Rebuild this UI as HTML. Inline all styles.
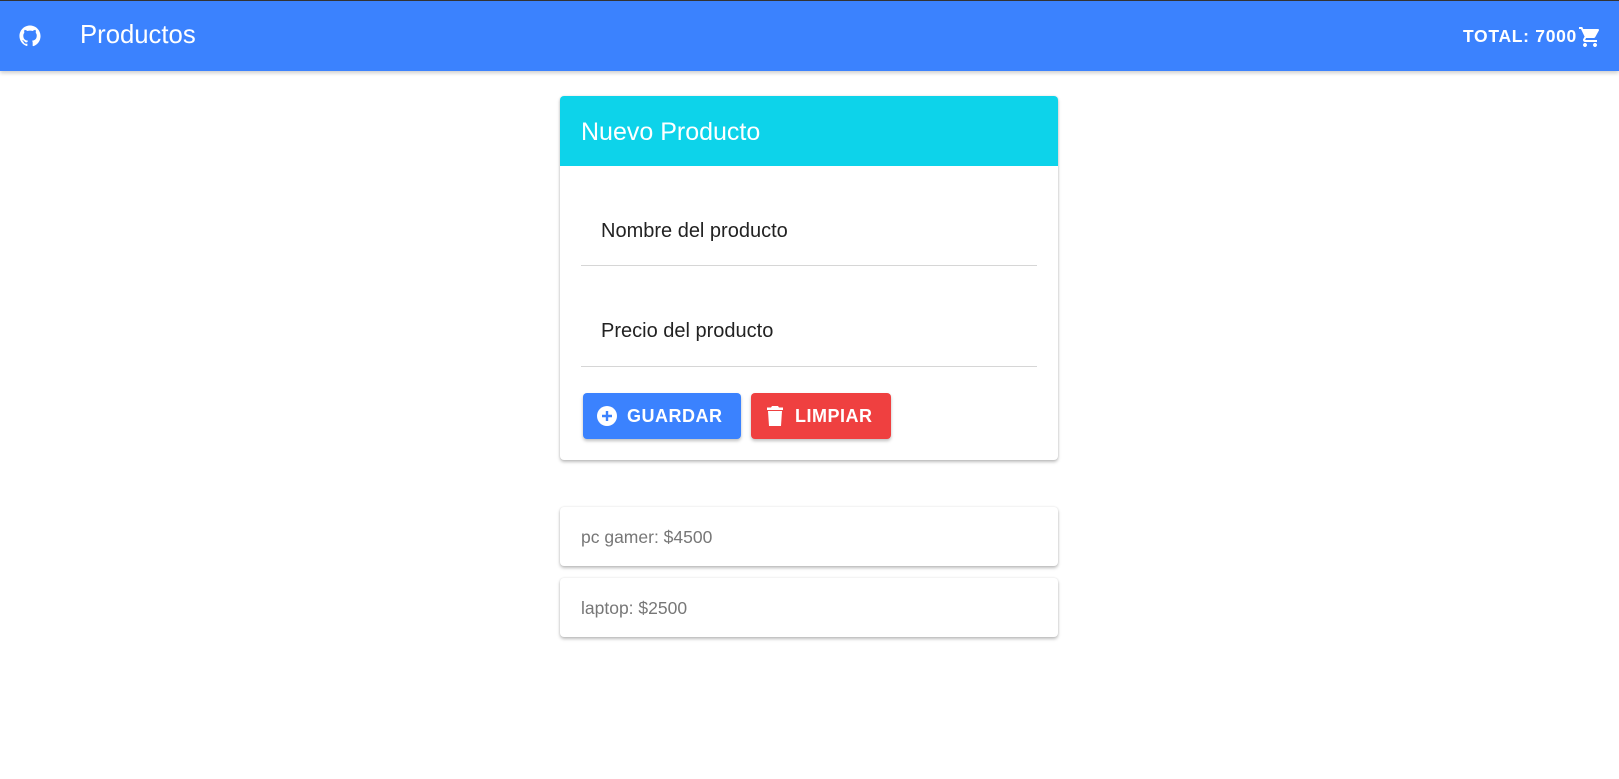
<!DOCTYPE html>
<html><head><meta charset="utf-8"><style>
*{box-sizing:border-box;margin:0;padding:0}
body{width:1619px;height:779px;background:#fff;font-family:"Liberation Sans",sans-serif;position:relative;overflow:hidden}
.bar{position:absolute;left:0;top:0;width:1619px;height:71px;background:#3b82fe;border-top:1px solid #333;box-shadow:0 2px 4px rgba(0,0,0,.2)}
.bar .t{position:absolute;left:80px;top:20px;color:#fff;font-size:25.7px}
.bar .tot{position:absolute;right:42px;top:25px;color:#fff;font-size:17.5px;font-weight:bold;letter-spacing:.7px}
.card{position:absolute;left:560px;width:498px;background:#fff;border-radius:4px;box-shadow:0 2px 3px rgba(0,0,0,.25),0 0 2px rgba(0,0,0,.1);overflow:hidden}
.head{background:#0dd3ea;height:70px;color:#fff;font-size:25px;padding:22px 21px}
.field{margin:0 21px;border-bottom:1px solid #d6d6d6;height:100px;position:relative}
.field span{position:absolute;left:20px;top:54px;font-size:20px;color:#222}
.btn{position:absolute;top:297px;height:46px;border-radius:4px;color:#fff;font-size:18px;font-weight:bold;letter-spacing:.5px;box-shadow:0 2px 3px rgba(0,0,0,.25);display:flex;align-items:center}
.item{position:absolute;left:560px;width:498px;height:59px;border-radius:4px;box-shadow:0 2px 3px rgba(0,0,0,.25),0 0 2px rgba(0,0,0,.1);font-size:17.5px;color:#777;padding:20px 21px}
</style></head><body>
<div class="bar">
<svg style="position:absolute;left:19px;top:24px" width="22" height="22" viewBox="0 0 24 24"><path fill="#fff" d="M12 .5C5.65.5.5 5.650.5 12c0 5.08 3.29 9.39 7.86 10.910.58.1.79-.25.79-.56v-2c-3.2.7-3.87-1.37-3.87-1.37-.52-1.33-1.28-1.690-1.28-1.69-1.04-.71.08-.7.08-.7 1.15.08 1.76 1.18 1.76 1.18 1.03 1.76 2.69 1.25 3.35.96.1-.74.4-1.25.73-1.54-2.55-.29-5.24-1.28-5.24-5.68 0-1.25.45-2.28 1.18-3.080-.12-.29-.51-1.46.11-3.04 0 0 .97-.31 3.17 1.18a11 11 0 0 1 5.77 0c2.2-1.49 3.17-1.18 3.17-1.18.63 1.58.23 2.75.11 3.04.74.8 1.18 1.83 1.18 3.08 0 4.41-2.69 5.38-5.25 5.67.41.36.78 1.06.78 2.14v3.17c0 .31.21.67.8.56A11.5 11.5 0 0 0 23.5 12C23.5 5.650 18.35.5 12 .5z"/></svg>
<div class="t">Productos</div>
<div class="tot">TOTAL: 7000</div>
<svg style="position:absolute;left:1578px;top:24px" width="24" height="24" viewBox="0 0 24 24"><path fill="#fff" d="M7 18c-1.1 0-2 .9-2 2s.9 2 2 2 2-.9 2-2-.9-2-2-2zM1 2v2h2l3.6 7.59-1.35 2.45c-.16.28-.25.61-.25.96 0 1.1.9 2 2 2h12v-2H7.42c-.14 0-.25-.11-.25-.25l.03-.12.9-1.63h7.45c.75 0 1.41-.41 1.75-1.03l3.58-6.49A1 1 0 0 0 20 4H5.21l-.94-2H1zm16 16c-1.1 0-2 .9-2 2s.9 2 2 2 2-.9 2-2-.9-2-2-2z"/></svg>
</div>
<div class="card" style="top:96px;height:364px">
<div class="head">Nuevo Producto</div>
<div class="field"><span>Nombre del producto</span></div>
<div class="field" style="height:101px"><span>Precio del producto</span></div>
<div class="btn" style="left:23px;width:158px;background:#3b82fe;padding-left:14px">
<svg width="20" height="20" viewBox="0 0 20 20" style="margin-right:10px"><circle cx="10" cy="10" r="10" fill="#fff"/><path d="M10 5v10M5 10h10" stroke="#3b82fe" stroke-width="2.4"/></svg>GUARDAR</div>
<div class="btn" style="left:191px;width:140px;background:#ef4040;padding-left:16px">
<svg width="16" height="20" viewBox="0 0 16 20" style="margin-right:12px"><path fill="#fff" d="M5 0h6l1 1.5h4V4H0V1.5h4zM1 5h14l-1 15H2z"/></svg>LIMPIAR</div>
</div>
<div class="item" style="top:507px">pc gamer: $4500</div>
<div class="item" style="top:578px">laptop: $2500</div>
</body></html>
